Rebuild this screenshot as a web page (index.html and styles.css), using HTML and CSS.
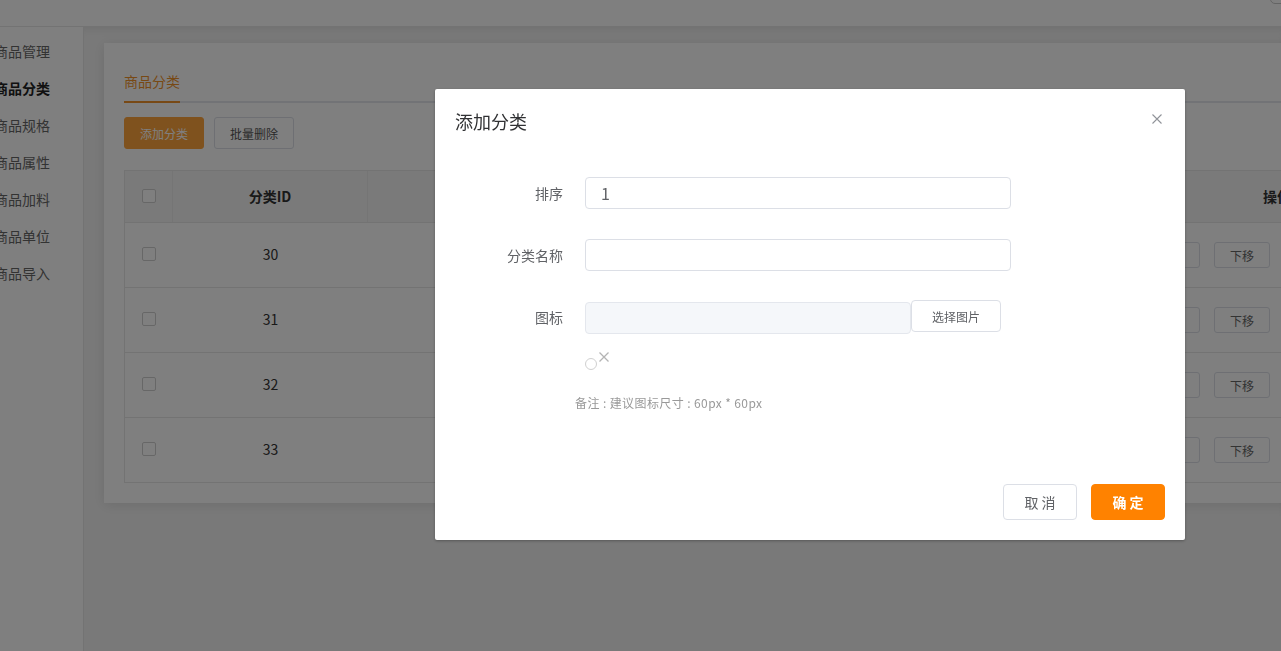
FILE: index.html
```html
<!DOCTYPE html>
<html lang="zh-CN">
<head>
<meta charset="utf-8">
<title>商品分类</title>
<link rel="stylesheet" href="styles.css">
</head>
<body>
<div class="app">
  <header class="topbar"><span class="top-btn"></span></header>
  <div class="main">
    <aside class="sidebar">
      <ul class="menu">
        <li class="menu-item">商品管理</li>
        <li class="menu-item active">商品分类</li>
        <li class="menu-item">商品规格</li>
        <li class="menu-item">商品属性</li>
        <li class="menu-item">商品加料</li>
        <li class="menu-item">商品单位</li>
        <li class="menu-item">商品导入</li>
      </ul>
    </aside>
    <section class="content">
      <div class="card">
        <div class="tabs"><span class="tab active">商品分类</span></div>
        <div class="toolbar">
          <button class="btn btn-primary">添加分类</button>
          <button class="btn">批量删除</button>
        </div>
        <div class="table">
          <div class="row head">
            <div class="cell"><span class="checkbox"></span></div>
            <div class="cell">分类ID</div>
            <div class="cell">分类名称</div>
            <div class="cell">图标</div>
            <div class="cell">操作</div>
          </div>
          <div class="row">
            <div class="cell"><span class="checkbox"></span></div>
            <div class="cell">30</div>
            <div class="cell">饮品</div>
            <div class="cell"></div>
            <div class="cell ops"><button class="op">上移</button><button class="op">下移</button><button class="op">编辑</button><button class="op">删除</button></div>
          </div>
          <div class="row">
            <div class="cell"><span class="checkbox"></span></div>
            <div class="cell">31</div>
            <div class="cell">小吃</div>
            <div class="cell"></div>
            <div class="cell ops"><button class="op">上移</button><button class="op">下移</button><button class="op">编辑</button><button class="op">删除</button></div>
          </div>
          <div class="row">
            <div class="cell"><span class="checkbox"></span></div>
            <div class="cell">32</div>
            <div class="cell">主食</div>
            <div class="cell"></div>
            <div class="cell ops"><button class="op">上移</button><button class="op">下移</button><button class="op">编辑</button><button class="op">删除</button></div>
          </div>
          <div class="row">
            <div class="cell"><span class="checkbox"></span></div>
            <div class="cell">33</div>
            <div class="cell">甜品</div>
            <div class="cell"></div>
            <div class="cell ops"><button class="op">上移</button><button class="op">下移</button><button class="op">编辑</button><button class="op">删除</button></div>
          </div>
        </div>
      </div>
    </section>
  </div>
</div>

<div class="mask"></div>

<div class="dialog">
  <div class="dialog-header">
    <span class="dialog-title">添加分类</span>
    <span class="dialog-close">
      <svg width="10" height="10" viewBox="0 0 10 10"><path d="M0.5 0.5L9.5 9.5M9.5 0.5L0.5 9.5" stroke="#909399" stroke-width="1.1" fill="none"/></svg>
    </span>
  </div>
  <div class="dialog-body">
    <div class="form-row">
      <label class="form-label">排序</label>
      <div class="input">1</div>
    </div>
    <div class="form-row">
      <label class="form-label">分类名称</label>
      <div class="input"></div>
    </div>
    <div class="form-row upload-row">
      <label class="form-label">图标</label>
      <div class="input input-disabled"></div>
      <button class="pick-btn">选择图片</button>
    </div>
    <div class="preview">
      <span class="preview-img"></span>
      <svg class="preview-del" width="10" height="10" viewBox="0 0 10 10"><path d="M0.5 0.5L9.5 9.5M9.5 0.5L0.5 9.5" stroke="#b4b4b4" stroke-width="1.3" fill="none"/></svg>
    </div>
    <p class="remark">备注 : 建议图标尺寸 : 60px * 60px</p>
  </div>
  <div class="dialog-footer">
    <button class="dbtn">取 消</button>
    <button class="dbtn dbtn-primary">确 定</button>
  </div>
</div>
</body>
</html>
```

FILE: styles.css
```css
* { box-sizing: border-box; }
html, body { margin: 0; padding: 0; }
body {
  width: 1281px;
  height: 651px;
  overflow: hidden;
  font-family: "Noto Sans CJK SC", "Noto Sans", sans-serif;
  font-size: 14px;
  color: #333;
  background: #f3f3f3;
}
button { font-family: inherit; cursor: pointer; }

.app { display: flex; flex-direction: column; height: 651px; }

.topbar {
  height: 27px;
  background: #fff;
  border-bottom: 1px solid #e6e6e6;
  display: flex;
  justify-content: flex-end;
  flex-shrink: 0;
}
.top-btn {
  width: 40px;
  height: 22px;
  margin-top: -18px;
  margin-right: -29px;
  border: 1px solid #c8c8c8;
  border-radius: 5px;
  background: #fff;
}

.main { display: flex; flex: 1; min-height: 0; }

.sidebar {
  width: 84px;
  flex-shrink: 0;
  background: #fff;
  border-right: 1px solid #e6e6e6;
  overflow: hidden;
}
.menu { list-style: none; margin: 0 0 0 -6px; padding: 6px 0 0; }
.menu-item {
  height: 37px;
  line-height: 37px;
  font-size: 14px;
  color: #666;
  white-space: nowrap;
}
.menu-item.active { color: #222; font-weight: bold; }

.content {
  flex: 1;
  padding: 16px 20px;
  overflow: hidden;
  box-shadow: inset 0 8px 10px -6px rgba(0,0,0,0.08);
}
.card {
  width: max-content;
  background: #fff;
  padding: 20px;
  box-shadow: 0 2px 12px rgba(0,0,0,0.1);
}

.tabs { border-bottom: 2px solid #e4e7ed; height: 40px; }
.tab {
  display: inline-block;
  height: 40px;
  line-height: 37px;
  font-size: 14px;
  color: #f0932b;
  border-bottom: 2px solid #f0932b;
}

.toolbar { display: flex; gap: 10px; margin-top: 14px; }
.btn {
  width: 80px;
  height: 32px;
  padding: 0;
  font-size: 12px;
  color: #555;
  background: #fff;
  border: 1px solid #dcdfe6;
  border-radius: 3px;
}
.btn-primary { background: #ffa53d; border-color: #ffa53d; color: #fff; }

.table {
  margin-top: 21px;
  border: 1px solid #e6e6e6;
  border-bottom: 0;
}
.row {
  display: grid;
  grid-template-columns: 48px 195px 372px 373px 328px;
  height: 65px;
  border-bottom: 1px solid #e6e6e6;
  align-items: center;
}
.row.head {
  height: 52px;
  background: #f5f5f5;
  font-weight: bold;
  color: #333;
}
.cell {
  height: 100%;
  display: flex;
  align-items: center;
  justify-content: center;
  font-size: 14px;
  padding-bottom: 2px;
}
.row.head .cell { border-right: 1px solid #ebebeb; }
.row.head .cell:last-child { border-right: 0; }
.checkbox {
  width: 14px;
  height: 14px;
  border: 1px solid #cfcfcf;
  border-radius: 2px;
  background: #fff;
}
.ops { gap: 14px; padding-bottom: 0; }
.op {
  width: 56px;
  height: 26px;
  padding: 0;
  font-size: 12px;
  color: #666;
  background: #fff;
  border: 1px solid #dcdfe6;
  border-radius: 3px;
}

.mask {
  position: fixed;
  inset: 0;
  background: rgba(0,0,0,0.5);
}

.dialog {
  position: fixed;
  left: 435px;
  top: 89px;
  width: 750px;
  background: #fff;
  border-radius: 2px;
  box-shadow: 0 1px 3px rgba(0,0,0,0.3);
}
.dialog-header { padding: 20px 20px 10px; position: relative; }
.dialog-title { font-size: 18px; line-height: 24px; color: #303133; }
.dialog-close {
  position: absolute;
  top: 25px;
  right: 23px;
  width: 10px;
  height: 10px;
  display: flex;
}

.dialog-body { padding: 34px 20px 72px; }
.form-row { display: flex; align-items: center; margin-bottom: 30px; }
.form-label {
  width: 108px;
  flex-shrink: 0;
  margin-right: 22px;
  text-align: right;
  font-size: 14px;
  color: #606266;
}
.input {
  width: 426px;
  height: 32px;
  border: 1px solid #dcdfe6;
  border-radius: 4px;
  padding-left: 15px;
  font-size: 16px;
  line-height: 30px;
  color: #606266;
}
.upload-row { align-items: flex-start; margin-bottom: 0; margin-top: -1px; }
.upload-row .form-label { line-height: 32px; margin-top: 1px; }
.input-disabled {
  width: 326px;
  margin-top: 2px;
  background: #f5f7fa;
  border-color: #e4e7ed;
}
.pick-btn {
  width: 90px;
  height: 32px;
  padding: 0;
  font-size: 12px;
  color: #606266;
  background: #fff;
  border: 1px solid #dcdfe6;
  border-radius: 4px;
}

.preview {
  display: flex;
  align-items: flex-start;
  margin-left: 130px;
  margin-top: 18px;
  height: 20px;
}
.preview-img {
  width: 12px;
  height: 12px;
  margin-top: 6px;
  border: 1px solid #d0d0d0;
  border-radius: 50%;
}
.preview-del { margin-left: 2px; }

.remark {
  margin: 22px 0 0 120px;
  font-size: 12px;
  line-height: 18px;
  letter-spacing: 0.4px;
  color: #999;
}

.dialog-footer {
  display: flex;
  justify-content: flex-end;
  gap: 14px;
  padding: 0 20px 20px;
}
.dbtn {
  width: 74px;
  height: 36px;
  padding: 0;
  font-size: 14px;
  color: #606266;
  background: #fff;
  border: 1px solid #dcdfe6;
  border-radius: 4px;
}
.dbtn-primary {
  background: #ff8200;
  border-color: #ff8200;
  color: #fff;
  font-weight: bold;
}
```
